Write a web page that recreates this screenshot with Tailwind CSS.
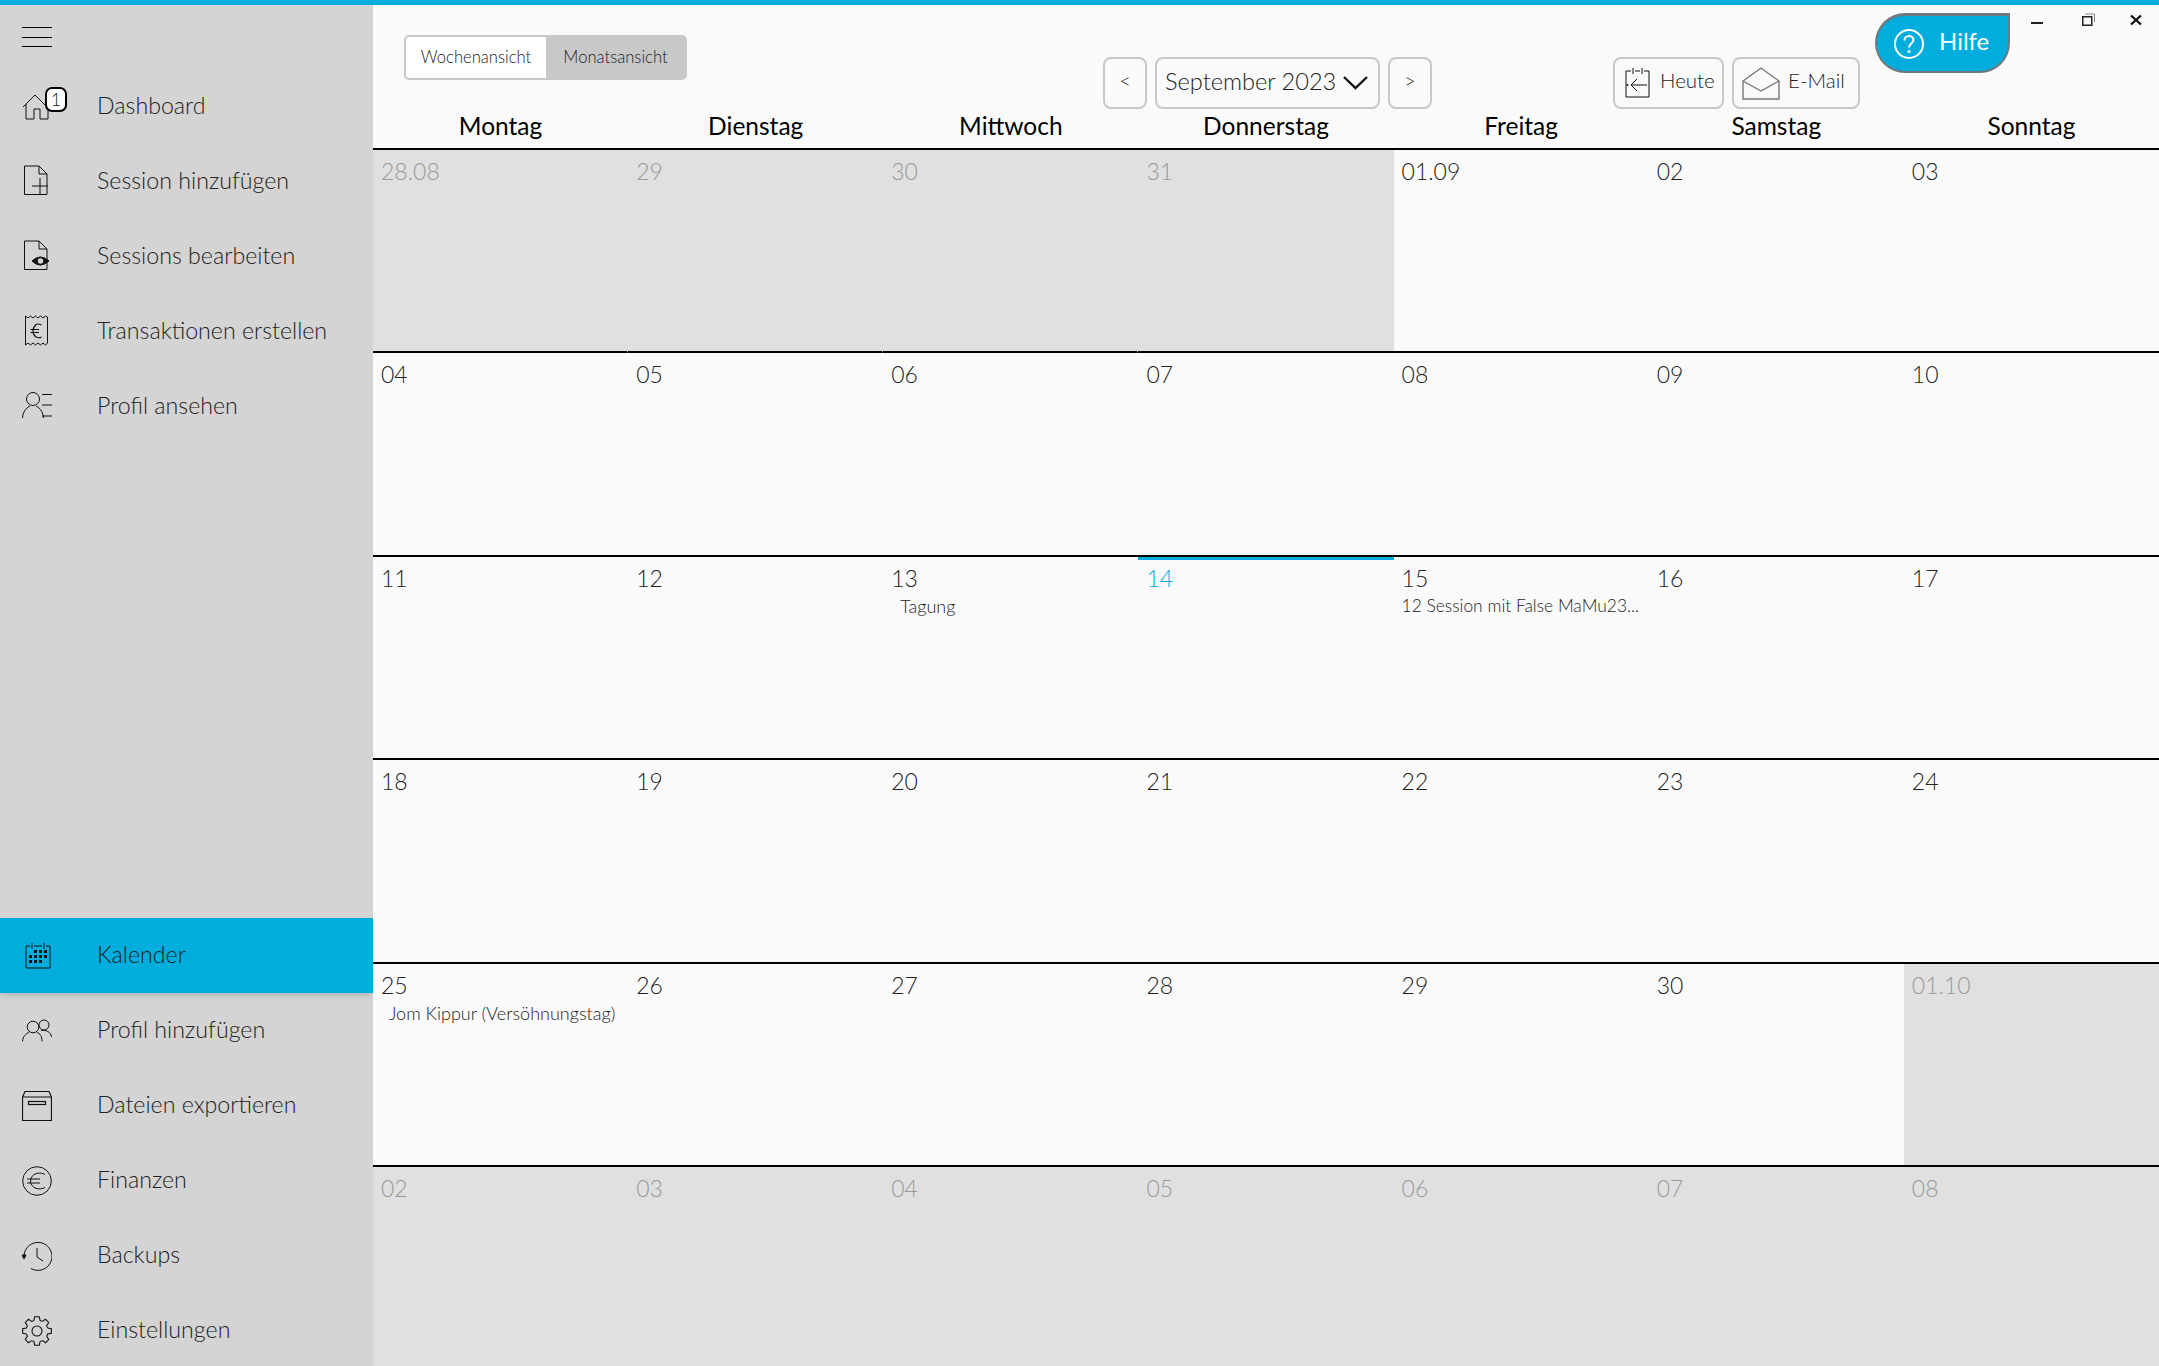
<!DOCTYPE html>
<html lang="de">
<head>
<meta charset="utf-8">
<title>Kalender</title>
<script src="https://cdn.jsdelivr.net/npm/@tailwindcss/browser@4"></script>
</head>
<body class="w-[2159px] h-[1366px] overflow-hidden bg-[#fafafa] font-['Lato','Liberation_Sans',sans-serif] font-light text-[#222]">
<div class="h-[5px] bg-[#00addc]"></div>
<div class="flex h-[1361px]">
  <!-- Sidebar -->
  <aside class="w-[373px] shrink-0 bg-[#d4d4d4] overflow-hidden">
    <div class="h-[62px] pl-[22px] pt-[22px]">
      <div class="w-[30px] h-[20px] flex flex-col justify-between">
        <div class="h-px bg-black"></div><div class="h-px bg-black"></div><div class="h-px bg-black"></div>
      </div>
    </div>
    <div class="flex flex-col">
      <div class="h-[75px] flex items-center text-[23.2px]">
        <div class="w-[97px] shrink-0 pl-[22px] relative">
          <svg width="30" height="30" viewBox="0 0 30 30" fill="none" stroke="#111" stroke-width="1"><path d="M1 17 L13 5 L25 17 M4 14 V29 H12 V19 H18 V29 H26 V14"/></svg>
          <div class="absolute left-[45px] top-[-3px] w-[22px] h-[25px] bg-white border-2 border-black rounded-[7px] text-[18px] leading-[20px] text-center">1</div>
        </div>
        <span class="pt-[1px]">Dashboard</span>
      </div>
      <div class="h-[75px] flex items-center text-[23.2px]">
        <div class="w-[97px] shrink-0 pl-[22px]">
          <svg width="30" height="32" viewBox="0 0 30 32" fill="none" stroke="#111" stroke-width="1"><path d="M2.5 2 H17 L25 10 V30.5 H2.5 Z M17 2 V10 H25"/><path d="M10 22 H26 M18 14 V30"/></svg>
        </div>
        <span class="pt-[1px]">Session hinzufügen</span>
      </div>
      <div class="h-[75px] flex items-center text-[23.2px]">
        <div class="w-[97px] shrink-0 pl-[22px]">
          <svg width="30" height="32" viewBox="0 0 30 32" fill="none" stroke="#111" stroke-width="1"><path d="M2.5 2 H17 L25 10 V30.5 H2.5 Z M17 2 V10 H25"/><path d="M10 22 Q18 14 27 22 Q18 30 10 22 Z" fill="#111"/><circle cx="18.5" cy="22" r="3.5" fill="#d4d4d4" stroke="#111" stroke-width="1.5"/></svg>
        </div>
        <span class="pt-[1px]">Sessions bearbeiten</span>
      </div>
      <div class="h-[75px] flex items-center text-[23.2px]">
        <div class="w-[97px] shrink-0 pl-[22px]">
          <svg width="30" height="32" viewBox="0 0 30 32" fill="none" stroke="#111" stroke-width="1"><path d="M3.5 2 L6 4 L8.5 2 L11 4 L13.5 2 L16 4 L18.5 2 L21 4 L23.5 2 L25.5 3 V29 L23.5 31 L21 29 L18.5 31 L16 29 L13.5 31 L11 29 L8.5 31 L6 29 L3.5 31 Z"/><path d="M19.5 11 Q16 9 13.5 11 Q11 14 11 17 Q11 21 14 23 Q17 24.5 19.5 23 M8.5 15.5 H17 M8.5 18.5 H17" stroke-width="1.2"/></svg>
        </div>
        <span class="pt-[1px]">Transaktionen erstellen</span>
      </div>
      <div class="h-[75px] flex items-center text-[23.2px]">
        <div class="w-[97px] shrink-0 pl-[22px]">
          <svg width="30" height="30" viewBox="0 0 30 30" fill="none" stroke="#111" stroke-width="1"><circle cx="11" cy="9" r="6.5"/><path d="M0.5 28 C1 20 6 17 8 16 M21.5 28 C21 20 16 17 14 16"/><path d="M20 4.5 H30 M20 15 H30 M20 26 H30"/></svg>
        </div>
        <span class="pt-[1px]">Profil ansehen</span>
      </div>
    </div>
    <div class="mt-[476px] flex flex-col">
      <div class="h-[75px] flex items-center text-[23.2px] bg-[#00addc] shadow-md relative">
        <div class="w-[97px] shrink-0 pl-[25px]">
          <svg width="26" height="26" viewBox="0 0 26 26" fill="none" stroke="#111" stroke-width="1"><path d="M5 3 H1 V25 H25 V3 H21 M9 3 H17 M7 0 V6 M19 0 V6"/><g fill="#111" stroke="none"><rect x="9" y="7" width="3" height="3"/><rect x="14" y="7" width="3" height="3"/><rect x="19" y="7" width="3" height="3"/><rect x="4" y="12" width="3" height="3"/><rect x="9" y="12" width="3" height="3"/><rect x="14" y="12" width="3" height="3"/><rect x="19" y="12" width="3" height="3"/><rect x="4" y="17" width="3" height="3"/><rect x="9" y="17" width="3" height="3"/><rect x="14" y="17" width="3" height="3"/></g></svg>
        </div>
        <span class="pb-[3px]">Kalender</span>
      </div>
      <div class="h-[75px] flex items-center text-[23.2px]">
        <div class="w-[97px] shrink-0 pl-[22px]">
          <svg width="30" height="24" viewBox="0 0 30 24" fill="none" stroke="#111" stroke-width="1"><circle cx="11" cy="8" r="5.8"/><circle cx="22" cy="6" r="5"/><path d="M0.5 22.5 C1 17 4 14.5 7 13.5 M20 22.5 C20 17 18 14.5 15 13.5 M19 11.5 C24 10.5 29 13 29.5 18"/></svg>
        </div>
        <span class="pb-[3px]">Profil hinzufügen</span>
      </div>
      <div class="h-[75px] flex items-center text-[23.2px]">
        <div class="w-[97px] shrink-0 pl-[22px]">
          <svg width="30" height="30" viewBox="0 0 30 30" fill="none" stroke="#111" stroke-width="1"><path d="M0.5 6 L3 0.5 H27 L29.5 6 V29.5 H0.5 Z M0.5 6 H29.5" stroke-width="1.2"/><rect x="6.5" y="10.5" width="17" height="3" stroke-width="1.2"/></svg>
        </div>
        <span class="pb-[3px]">Dateien exportieren</span>
      </div>
      <div class="h-[75px] flex items-center text-[23.2px]">
        <div class="w-[97px] shrink-0 pl-[22px]">
          <svg width="30" height="30" viewBox="0 0 30 30" fill="none" stroke="#111" stroke-width="1"><circle cx="15" cy="15" r="14.3"/><path d="M23 8.5 C18 5.5 9 7 8.5 15 C9 23 18 24.5 23 21.5 M5 13 H18 M5 17 H18"/></svg>
        </div>
        <span class="pb-[3px]">Finanzen</span>
      </div>
      <div class="h-[75px] flex items-center text-[23.2px]">
        <div class="w-[97px] shrink-0 pl-[22px]">
          <svg width="30" height="30" viewBox="0 0 30 30" fill="none" stroke="#111" stroke-width="1"><path d="M2 15 A14 14 0 1 1 9 27.5"/><path d="M15 7 V16 L21 20"/><path d="M0 14 L4 14 L2 18 Z" fill="#111"/></svg>
        </div>
        <span class="pb-[3px]">Backups</span>
      </div>
      <div class="h-[75px] flex items-center text-[23.2px]">
        <div class="w-[97px] shrink-0 pl-[22px]">
          <svg width="30" height="30" viewBox="0 0 30 30" fill="none" stroke="#111" stroke-width="1.1"><circle cx="15" cy="15" r="5"/><g transform="translate(15 15)">
            <path d="M-3.03 -10.57 L-2.27 -14.32 L2.27 -14.32 L3.03 -10.57 A11 11 0 0 1 5.33 -9.62"/>
            <path transform="rotate(45)" d="M-3.03 -10.57 L-2.27 -14.32 L2.27 -14.32 L3.03 -10.57 A11 11 0 0 1 5.33 -9.62"/>
            <path transform="rotate(90)" d="M-3.03 -10.57 L-2.27 -14.32 L2.27 -14.32 L3.03 -10.57 A11 11 0 0 1 5.33 -9.62"/>
            <path transform="rotate(135)" d="M-3.03 -10.57 L-2.27 -14.32 L2.27 -14.32 L3.03 -10.57 A11 11 0 0 1 5.33 -9.62"/>
            <path transform="rotate(180)" d="M-3.03 -10.57 L-2.27 -14.32 L2.27 -14.32 L3.03 -10.57 A11 11 0 0 1 5.33 -9.62"/>
            <path transform="rotate(225)" d="M-3.03 -10.57 L-2.27 -14.32 L2.27 -14.32 L3.03 -10.57 A11 11 0 0 1 5.33 -9.62"/>
            <path transform="rotate(270)" d="M-3.03 -10.57 L-2.27 -14.32 L2.27 -14.32 L3.03 -10.57 A11 11 0 0 1 5.33 -9.62"/>
            <path transform="rotate(315)" d="M-3.03 -10.57 L-2.27 -14.32 L2.27 -14.32 L3.03 -10.57 A11 11 0 0 1 5.33 -9.62"/>
          </g></svg>
        </div>
        <span class="pb-[3px]">Einstellungen</span>
      </div>
    </div>
  </aside>

  <!-- Main -->
  <main class="flex-1 min-w-0 relative overflow-hidden">
    <!-- Header -->
    <header class="h-[145px] flex flex-col border-b-2 border-black">
      <div class="h-[103px] flex items-start">
        <div class="ml-[31px] mt-[30px] w-[283px] h-[45px] flex rounded-[5px] border-2 border-[#c8c8c8] bg-[#c8c8c8] text-[16.6px] overflow-hidden">
          <div class="w-[140px] bg-white flex items-center justify-center">Wochenansicht</div>
          <div class="flex-1 flex items-center justify-center">Monatsansicht</div>
        </div>
        <div class="ml-[416px] mt-[52px] w-[44px] h-[52px] rounded-[8px] border-2 border-[#c8c8c8] flex items-center justify-center text-[20px] pb-[6px]">&lt;</div>
        <div class="ml-[8px] mt-[52px] w-[225px] h-[52px] rounded-[8px] border-2 border-[#c8c8c8] flex items-center pl-[8px] gap-[7px] text-[23.6px] whitespace-nowrap">
          <span class="pb-[2px]">September 2023</span>
          <svg width="25" height="14" viewBox="0 0 25 14" fill="none" stroke="#111" stroke-width="2.4"><path d="M1 1 L12.5 12 L24 1"/></svg>
        </div>
        <div class="ml-[8px] mt-[52px] w-[44px] h-[52px] rounded-[8px] border-2 border-[#c8c8c8] flex items-center justify-center text-[20px] pb-[6px]">&gt;</div>
        <div class="ml-[181px] mt-[52px] w-[111px] h-[52px] rounded-[8px] border-2 border-[#c8c8c8] flex items-center pl-[10px] gap-[9px] text-[20.5px]">
          <svg width="26" height="30" viewBox="0 0 26 30" fill="none" stroke="#111" stroke-width="1"><path d="M6 3 H1 V29 H24 V3 H19 M10 3 H15 M8 0 V6 M17 0 V6"/><path d="M22 17 H6 M12 11 L6 17 L12 23"/><circle cx="2.5" cy="17" r="1" fill="#111" stroke="none"/></svg>
          <span class="pb-[5px]">Heute</span>
        </div>
        <div class="ml-[8px] mt-[52px] w-[128px] h-[52px] rounded-[8px] border-2 border-[#c8c8c8] flex items-center pl-[8px] gap-[8px] text-[20.5px]">
          <svg width="38" height="33" viewBox="0 0 38 33" fill="none" stroke="#777" stroke-width="1.4"><path d="M1 14 L19 1 L37 14 V32 H1 Z"/><path d="M1 14 L19 24 L37 14"/></svg>
          <span class="pb-[5px]">E-Mail</span>
        </div>
        <div class="ml-[15px] mt-[8px] w-[135px] h-[60px] bg-[#00addc] border-2 border-t-[3px] border-[#6b7b80] rounded-l-[30px] rounded-br-[30px] flex items-center pl-[16px] gap-[14px] text-white text-[24px] font-normal">
          <svg width="32" height="32" viewBox="0 0 32 32" fill="none" stroke="#fff" stroke-width="2"><circle cx="16" cy="16" r="14"/><path d="M11.5 12.5 C11.5 6.5 20.5 6.5 20.5 12 C20.5 15.5 16 15.5 16 19.5"/><circle cx="16" cy="23.5" r="0.6"/></svg>
          <span class="pb-[6px]">Hilfe</span>
        </div>
      </div>
      <div class="grid grid-cols-7 text-black font-normal text-[24.5px] text-center leading-[36px]">
        <div>Montag</div><div>Dienstag</div><div>Mittwoch</div><div>Donnerstag</div><div>Freitag</div><div>Samstag</div><div>Sonntag</div>
      </div>
    </header>

    <!-- Window controls -->
    <div class="absolute top-[8px] right-[17px] flex items-start">
      <div class="w-[12px] h-[2px] bg-[#222] mt-[9px]"></div>
      <svg class="ml-[39px]" width="13" height="13" viewBox="0 0 13 13" fill="none" stroke="#222" stroke-width="1.5"><rect x="0.75" y="3.75" width="9" height="8.5"/><path d="M3.5 1 H12.5 V9" stroke="#888" stroke-width="1"/></svg>
      <svg class="ml-[35px] mt-[2px]" width="12" height="10" viewBox="0 0 12 10" fill="none" stroke="#111" stroke-width="2.2"><path d="M1 0.5 L11 9.5 M11 0.5 L1 9.5"/></svg>
    </div>

    <!-- Month grid -->
    <div class="grid grid-cols-7 auto-rows-[203.4px] text-[23px] leading-[28px] [&>div]:border-b-2 [&>div]:border-b-black [&>div]:pl-[8px] [&>div]:pt-[7px] [&>div]:relative">
      <div class="bg-[#e0e0e0] text-[#999] border-r border-r-[#dcdcdc]">28.08</div>
      <div class="bg-[#e0e0e0] text-[#999] border-r border-r-[#dcdcdc]">29</div>
      <div class="bg-[#e0e0e0] text-[#999] border-r border-r-[#dcdcdc]">30</div>
      <div class="bg-[#e0e0e0] text-[#999]">31</div>
      <div>01.09</div><div>02</div><div>03</div>

      <div>04</div><div>05</div><div>06</div><div>07</div><div>08</div><div>09</div><div>10</div>

      <div>11</div><div>12</div>
      <div>13<p class="text-[18px] leading-[22px] pl-[9px] pt-[3px] whitespace-nowrap">Tagung</p></div>
      <div class="text-[#00addc]"><span class="absolute left-0 right-0 top-0 h-[3px] bg-[#00addc]"></span>14</div>
      <div>15<p class="text-[17.4px] leading-[22px] pt-[3px] whitespace-nowrap overflow-hidden w-[242px]">12 Session mit False MaMu23...</p></div>
      <div>16</div><div>17</div>

      <div>18</div><div>19</div><div>20</div><div>21</div><div>22</div><div>23</div><div>24</div>

      <div>25<p class="text-[18px] leading-[22px] pl-[8px] pt-[3px] whitespace-nowrap">Jom Kippur (Versöhnungstag)</p></div>
      <div>26</div><div>27</div><div>28</div><div>29</div><div>30</div>
      <div class="bg-[#e0e0e0] text-[#999]">01.10</div>

      <div class="bg-[#e0e0e0] text-[#999] border-r border-r-[#dcdcdc] !border-b-0">02</div>
      <div class="bg-[#e0e0e0] text-[#999] border-r border-r-[#dcdcdc] !border-b-0">03</div>
      <div class="bg-[#e0e0e0] text-[#999] border-r border-r-[#dcdcdc] !border-b-0">04</div>
      <div class="bg-[#e0e0e0] text-[#999] border-r border-r-[#dcdcdc] !border-b-0">05</div>
      <div class="bg-[#e0e0e0] text-[#999] border-r border-r-[#dcdcdc] !border-b-0">06</div>
      <div class="bg-[#e0e0e0] text-[#999] border-r border-r-[#dcdcdc] !border-b-0">07</div>
      <div class="bg-[#e0e0e0] text-[#999] !border-b-0">08</div>
    </div>
  </main>
</div>
</body>
</html>
